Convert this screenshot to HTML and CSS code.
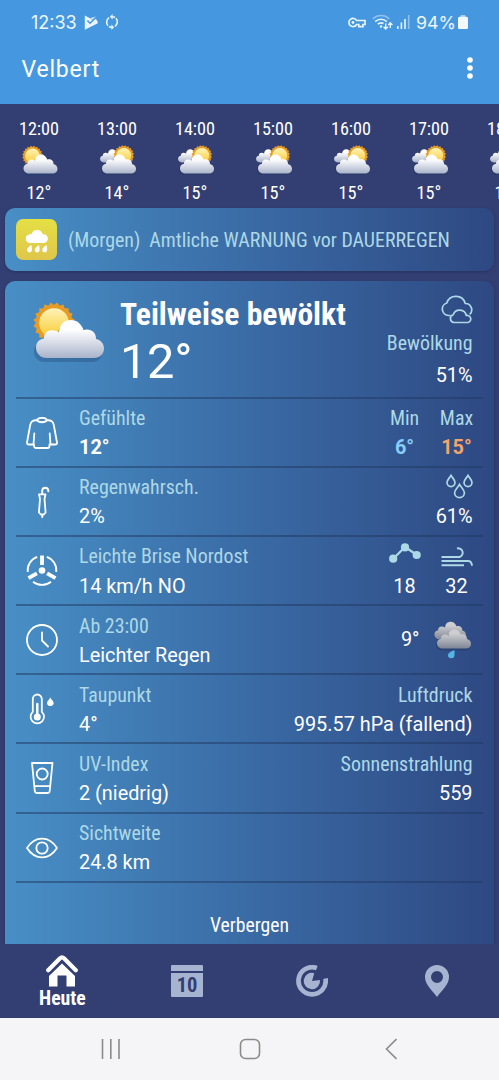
FILE: index.html
```html
<!DOCTYPE html>
<html lang="de">
<head>
<meta charset="utf-8">
<title>Velbert</title>
<link rel="stylesheet" href="styles.css">
</head>
<body>
<svg class="defs" width="0" height="0">
  <defs>
    <linearGradient id="sunFill" x1="0" y1="0" x2="0" y2="1"><stop offset="0" stop-color="#fff3b8"/><stop offset="1" stop-color="#f9cb30"/></linearGradient>
    <linearGradient id="cloudFill" x1="0" y1="0" x2="0" y2="1"><stop offset=".25" stop-color="#ffffff"/><stop offset="1" stop-color="#a9b3ca"/></linearGradient>
    <linearGradient id="greyFill" x1="0" y1="0" x2="0" y2="1"><stop offset=".2" stop-color="#cfcfd1"/><stop offset="1" stop-color="#7f8696"/></linearGradient>
    <path id="cloudShape" d="M14 57C7 57 3 52 3 46.500C3 41.500 6.500 38 11 37.500C10.500 32.500 14.500 29 19 29.200C21.500 29.300 24 30 26 31.500C26.500 23.500 31 19 38 19C44 19 48.500 23 50.500 29C57 27 63.500 31 63 38C68 39 71 43 71 47.500C71 53 67 57 61 57Z"/>
    <g id="sun">
      <g fill="#e79c26">
        <rect x="-14.700" y="-14.700" width="29.400" height="29.400"/>
        <rect x="-14.700" y="-14.700" width="29.400" height="29.400" transform="rotate(18)"/>
        <rect x="-14.700" y="-14.700" width="29.400" height="29.400" transform="rotate(36)"/>
        <rect x="-14.700" y="-14.700" width="29.400" height="29.400" transform="rotate(54)"/>
        <rect x="-14.700" y="-14.700" width="29.400" height="29.400" transform="rotate(72)"/>
      </g>
      <circle r="14.800" fill="url(#sunFill)"/>
    </g>
    <symbol id="partly" viewBox="0 0 72 62">
      <use href="#sun" x="21" y="22"/>
      <use href="#cloudShape" x="-2" y="4" fill="#1d3d66" opacity=".3"/>
      <use href="#cloudShape" fill="url(#cloudFill)"/>
    </symbol>
    <symbol id="mostly" viewBox="0 0 72 62">
      <use href="#cloudShape" transform="translate(-2 -5) scale(.7)" fill="#1d3055" opacity=".4"/>
      <use href="#cloudShape" transform="translate(-2 -5) scale(.7)" fill="url(#cloudFill)"/>
      <use href="#sun" x="47.500" y="21"/>
      <use href="#cloudShape" x="-1" y="3" fill="#1d3055" opacity=".35"/>
      <use href="#cloudShape" x="1" fill="url(#cloudFill)"/>
    </symbol>
  </defs>
</svg>
<div class="phone">
  <header class="top">
    <div class="status">
      <span class="clock">12:33</span>
      <svg class="s-play" viewBox="0 0 14 15"><path d="M.8 .5L6 3.300L12 1.500V4L13.800 7V8.300L.8 14.800Z" fill="#e8f5fd"/><path d="M3.400 5.600L6 8.300L12.200 2.300" fill="none" stroke="#4598e0" stroke-width="1.500"/><path d="M6.500 3.600L8.800 4.600L12.600 .6" fill="none" stroke="#4598e0" stroke-width=".6"/></svg>
      <svg class="s-sync" viewBox="0 0 14 16"><g fill="none" stroke="#e8f5fd" stroke-width="1.600"><path d="M4 3.700A5.500 5.500 0 0 0 3 11.800M10 12.300A5.500 5.500 0 0 0 11 4.200M6.500 2.700C8 2.600 9 2.800 10 3.500M7.500 13.300C6 13.400 5 13.200 4 12.500"/></g><path d="M7.600 0V5.400L4.800 2.700ZM6.400 16V10.600L9.200 13.300Z" fill="#e8f5fd"/></svg>
      <span class="grow"></span>
      <svg class="s-key" viewBox="0 0 18 11"><g fill="none" stroke="#e8f5fd" stroke-width="1.700"><path d="M8.600 3.500A4.100 4.100 0 1 0 8.600 7.500H10.800V9.700H15V7.500H17V3.500Z"/></g><circle cx="5" cy="5.500" r="1.400" fill="#e8f5fd"/></svg>
      <svg class="s-wifi" viewBox="0 0 21 16"><g fill="none" stroke="#e8f5fd" stroke-width="1.600"><path d="M.8 4.800A12 12 0 0 1 17.200 4.800" opacity=".45"/><path d="M3.200 7.600A8.500 8.500 0 0 1 14.800 7.600M5.800 10.200A5 5 0 0 1 11.500 9.500"/><path d="M13.700 9.500V15M11.600 12.800L13.700 15L15.800 12.800M18.300 14V9M16.300 11L18.300 8.800L20.400 11" stroke-width="1.400"/></g><circle cx="9" cy="12.500" r="1.200" fill="#e8f5fd"/></svg>
      <svg class="s-signal" viewBox="0 0 13 14"><g fill="#e8f5fd"><rect y="11" width="1.600" height="3"/><rect x="3.600" y="7.500" width="1.600" height="6.500"/><rect x="7.200" y="4" width="1.600" height="10"/><rect x="10.900" width="1.600" height="14" opacity=".45"/></g></svg>
      <span class="percent">94%</span>
      <svg class="s-batt" viewBox="0 0 10 14"><rect x="2.500" width="5" height="4" rx="1" fill="#a5cff1"/><rect y="1.800" width="10" height="12.200" rx="1.500" fill="#f2f8fd"/></svg>
    </div>
    <div class="titlebar">
      <h1>Velbert</h1>
      <svg class="dots" viewBox="0 0 6 22"><g fill="#fff"><circle cx="3" cy="3" r="2.800"/><circle cx="3" cy="11" r="2.800"/><circle cx="3" cy="19" r="2.800"/></g></svg>
    </div>
  </header>

  <section class="hours">
    <div class="hour"><span>12:00</span><svg><use href="#partly"/></svg><span>12°</span></div>
    <div class="hour"><span>13:00</span><svg><use href="#mostly"/></svg><span>14°</span></div>
    <div class="hour"><span>14:00</span><svg><use href="#mostly"/></svg><span>15°</span></div>
    <div class="hour"><span>15:00</span><svg><use href="#mostly"/></svg><span>15°</span></div>
    <div class="hour"><span>16:00</span><svg><use href="#mostly"/></svg><span>15°</span></div>
    <div class="hour"><span>17:00</span><svg><use href="#mostly"/></svg><span>15°</span></div>
    <div class="hour"><span>18:00</span><svg><use href="#mostly"/></svg><span>15°</span></div>
  </section>

  <section class="warning">
    <div class="badge"><svg viewBox="0 0 24 26" width="24" height="26"><g fill="#fff"><path d="M5 16A4.400 4.400 0 0 1 3.900 7.400A4.700 4.700 0 0 1 6.500 7.200A5.800 5.800 0 0 1 17.700 7.300A4.400 4.400 0 1 1 19 16Z"/><path id="wd" d="M6.300 18C4.500 19.500 2 20.500 2 23A2.400 2.400 0 0 0 6.900 23C7 21 6.600 19.500 6.300 18Z"/><use href="#wd" x="7.700"/><use href="#wd" x="15.200"/></g></svg></div>
    <span class="warn-text">(Morgen)&nbsp; Amtliche WARNUNG vor DAUERREGEN</span>
  </section>

  <main class="card">
    <section class="now">
      <svg class="now-icon"><use href="#partly"/></svg>
      <div class="now-main"><h2>Teilweise bewölkt</h2><div class="temp">12°</div></div>
      <div class="now-side">
        <svg width="33" height="30" viewBox="0 0 33 30"><g fill="none" stroke="#add8e6" stroke-width="1.700" stroke-linejoin="round"><path d="M10.500 21.500H8.500A6.400 6.400 0 0 1 6.800 9A9.700 9.700 0 0 1 25.300 9.500A6.300 6.300 0 0 1 29.800 20.300"/><path d="M14 28.500A4 4 0 0 1 13.200 20.700A6.800 6.800 0 0 1 26.300 21.500A3.600 3.600 0 0 1 28 28.500Z"/></g></svg>
        <span class="label">Bewölkung</span><span class="value">51%</span>
      </div>
    </section>

    <section class="row">
      <svg class="icon" viewBox="0 0 32 32"><path d="M11 3C6.500 3.500 5 4 4.200 8L1 25.500Q.8 27.500 3 27.500H7.500L8.300 16.500M8 27.500V29Q8.200 31 10 31H21.500Q23.500 31 23.500 29V27.500M23.700 16.500L24.500 27.500H29Q31.300 27.500 31 25.500L27.800 8C27 4 25.500 3.500 21 3C20 0 12 0 11 3C12.500 6 19.500 6 21 3"/></svg>
      <div class="pair"><span class="label">Gefühlte</span><b class="value">12°</b></div>
      <div class="pair mid"><span class="label">Min</span><b class="value min">6°</b></div>
      <div class="pair mid max-col"><span class="label">Max</span><b class="value max">15°</b></div>
    </section>
    <section class="row">
      <svg class="icon" viewBox="0 0 32 32"><path d="M16.200 8V4.300A3.100 3.100 0 0 1 22.300 4.300V5.300" class="hook"/><path d="M13 8.300H19.500L18.500 13L19.600 26.500L17.800 28.500H14.800L12.900 26.500L14 13ZM16.300 28.500V31.300"/></svg>
      <div class="pair"><span class="label">Regenwahrsch.</span><span class="value">2%</span></div>
      <div class="pair end"><span class="pic"><svg width="27" height="25" viewBox="0 0 27 25"><g fill="none" stroke="#add8e6" stroke-width="1.700"><path d="M5 1.300C3.500 4 1 6 1 8.600A4 4 0 0 0 9 8.600C9 6 6.500 4 5 1.300Z"/><path d="M22 1.300C20.500 4 18 6 18 8.600A4 4 0 0 0 26 8.600C26 6 23.500 4 22 1.300Z"/><path d="M13.500 10.500C11.800 13.500 8.600 15.800 8.600 18.800A4.900 4.900 0 0 0 18.400 18.800C18.400 15.800 15.200 13.500 13.500 10.500Z"/></g></svg></span><span class="value">61%</span></div>
    </section>
    <section class="row">
      <svg class="icon" viewBox="0 0 32 32"><path class="arc" d="M11.200 1.900A14.400 14.400 0 0 0 1.700 17M20.800 1.900A14.400 14.400 0 0 1 30.300 17M7 26.800A14.400 14.400 0 0 0 25 26.800"/><circle cx="16" cy="15.500" r="3.300" class="solid"/><path class="blade" d="M16 10V.5M10.900 18.300L2.500 23.200M21.100 18.300L29.500 23.200"/></svg>
      <div class="pair"><span class="label">Leichte Brise Nordost</span><span class="value">14 km/h NO</span></div>
      <div class="pair mid"><span class="pic"><svg width="32" height="21" viewBox="0 0 32 21"><path d="M4 16L16 4L28 12" fill="none" stroke="#add8e6" stroke-width="2.200"/><g fill="#add8e6"><circle cx="4.200" cy="15.700" r="4.100"/><circle cx="16" cy="4.400" r="4.100"/><circle cx="27.700" cy="12" r="4.100"/></g></svg></span><span class="value">18</span></div>
      <div class="pair mid max-col"><span class="pic wind"><svg width="32" height="20" viewBox="0 0 32 20"><path d="M.5 10H18.500A4.200 4.200 0 1 0 16 1.500M.5 14H27Q30.700 14 31 18.800M.5 18.300H23" fill="none" stroke="#add8e6" stroke-width="1.900"/></svg></span><span class="value">32</span></div>
    </section>
    <section class="row">
      <svg class="icon" viewBox="0 0 32 32"><circle cx="16" cy="16" r="15"/><path d="M16 8.500V16.500L22 22.500"/></svg>
      <div class="pair"><span class="label">Ab 23:00</span><span class="value">Leichter Regen</span></div>
      <div class="later"><span class="value">9°</span><svg width="40" height="40" viewBox="0 0 80 80"><use href="#cloudShape" transform="translate(1 -13) scale(.93 .92)" fill="#1d3055" opacity=".3"/><use href="#cloudShape" transform="translate(2 -14) scale(.93 .92)" fill="url(#greyFill)"/><use href="#cloudShape" x="5" y="4" fill="#1d3055" opacity=".35"/><use href="#cloudShape" transform="translate(7 0)" fill="url(#greyFill)"/><path d="M45 60C39 63 32 65 32 70A6.200 6.200 0 0 0 45 70C45.500 67 45 63 45 60Z" fill="#55b6e6"/></svg></div>
    </section>
    <section class="row">
      <svg class="icon" viewBox="0 0 32 32"><path d="M6.800 18.800V6A4.500 4.500 0 0 1 15.800 6V18.800A6.700 6.700 0 1 1 6.800 18.800Z"/><path d="M11.300 11V22" class="stem"/><circle cx="11.300" cy="24" r="3.500" class="solid"/><path class="solid" d="M24.300 4.500C23 7 21 8 21 10.300A3.400 3.400 0 0 0 27.700 10.300C27.700 8 25.600 7 24.300 4.500Z"/></svg>
      <div class="pair"><span class="label">Taupunkt</span><span class="value">4°</span></div>
      <div class="pair end"><span class="label">Luftdruck</span><span class="value">995.57 hPa (fallend)</span></div>
    </section>
    <section class="row">
      <svg class="icon" viewBox="0 0 32 32"><path d="M6 1H26.500L23.700 29Q23.500 31 21.500 31H11Q9 31 8.800 29ZM8.300 24.200H24.200"/><circle cx="16.200" cy="12" r="5.500"/></svg>
      <div class="pair"><span class="label">UV-Index</span><span class="value">2 (niedrig)</span></div>
      <div class="pair end"><span class="label">Sonnenstrahlung</span><span class="value">559</span></div>
    </section>
    <section class="row">
      <svg class="icon" viewBox="0 0 32 32"><path d="M1 16C9 3.500 23 3.500 31 16C23 28.500 9 28.500 1 16Z"/><circle cx="16" cy="16" r="5.700"/></svg>
      <div class="pair"><span class="label">Sichtweite</span><span class="value">24.8 km</span></div>
    </section>
    <div class="hide">Verbergen</div>
  </main>

  <nav class="tabs">
    <div class="tab active"><svg width="32" height="33" viewBox="0 0 32 33"><path d="M2.200 16.200L14 4.300Q16 2.500 18 4.300L29.800 16.200" fill="none" stroke="#fff" stroke-width="4.200" stroke-linecap="round"/><path d="M16 9.500L29 22V32.500H20.500V21.500H11.500V32.500H3V22Z" fill="#fff"/></svg><span>Heute</span></div>
    <div class="tab"><div class="cal"><div class="cal-top"></div><div class="cal-day">10</div></div></div>
    <div class="tab"><svg width="32" height="32" viewBox="0 0 32 32"><path d="M20.800 3.100A13.600 13.600 0 1 0 29.500 13.500" fill="none" stroke="#a6b4d1" stroke-width="4.700"/><path d="M16 16L18.300 8.200A8.200 8.200 0 1 0 24 15Z" fill="#a6b4d1"/></svg></div>
    <div class="tab"><svg width="24" height="32" viewBox="0 0 24 32"><path fill="#a6b4d1" fill-rule="evenodd" d="M12 0A12 12 0 0 0 0 12C0 20 8 26 12 32C16 26 24 20 24 12A12 12 0 0 0 12 0ZM12 6A6 6 0 1 1 12 18A6 6 0 1 1 12 6Z"/></svg></div>
  </nav>
  <footer class="sysnav">
    <svg width="20" height="20" viewBox="0 0 20 20"><path d="M1.500 0V20M9.800 0V20M18 0V20"/></svg>
    <svg class="home" width="22" height="22" viewBox="0 0 22 22"><rect x="1.500" y="1.500" width="19" height="19" rx="5"/></svg>
    <svg width="12" height="22" viewBox="0 0 12 22"><path d="M11.500 1L1.500 11L11.500 21"/></svg>
  </footer>
</div>
</body>
</html>
```
FILE: styles.css
```css
* { box-sizing: border-box; }
body { margin: 0; font-family: "Roboto", sans-serif; color: #fff; background: #333f73; }
.defs { position: absolute; }
svg { display: block; flex: none; }
.phone { width: 499px; height: 1080px; display: flex; flex-direction: column; overflow: hidden; }

.top { height: 104px; background: #4598e0; flex: none; }
.status { height: 44px; padding: 0 31px; display: flex; align-items: center; color: #edf6fd; font: 18px "Inter", sans-serif; }
.clock { width: 46px; font-weight: 400; white-space: nowrap; }
.s-play { width: 14px; height: 15px; margin-left: 7px; }
.s-sync { width: 14px; height: 16px; margin-left: 7px; }
.grow { flex: 1; }
.s-key { width: 18px; height: 11px; }
.s-wifi { width: 21px; height: 16px; margin-left: 6px; }
.s-signal { width: 13px; height: 14px; margin-left: 4px; }
.percent { width: 38px; margin-left: 6px; white-space: nowrap; font-weight: 400; font-size: 17.800px; }
.s-batt { width: 10px; height: 14px; margin-left: 4px; }
.titlebar { height: 50px; padding: 0 26px 0 21.500px; display: flex; align-items: center; justify-content: space-between; }
h1 { margin: 0; font-size: 23px; font-weight: 400; letter-spacing: .8px; }
.dots { width: 6px; height: 22px; margin-top: -2px; }

.hours { height: 104px; padding-top: 13px; display: flex; flex: none; overflow: hidden; }
.hour { width: 78px; flex: none; display: flex; flex-direction: column; align-items: center; font-size: 18.200px; line-height: 24px; font-stretch: 75%; }
.hour svg { width: 36px; height: 31px; margin: 4px 0 5px 1px; }

.warning { height: 63px; margin: 0 5px; padding-left: 11px; display: flex; align-items: center; gap: 11px; border-radius: 10px; background: linear-gradient(90deg, #488fc6, #3a6ba5 50%, #2e4882); box-shadow: 0 1px 3px #26325c; flex: none; }
.badge { width: 41px; height: 41px; border-radius: 7px; background: linear-gradient(#e4e044, #dfc64b); display: grid; place-items: center; }
.warn-text { font-size: 19.900px; font-stretch: 75%; color: #add8e6; white-space: nowrap; padding-top: 2px; }

.card { height: 663px; margin: 10px 5px 0; padding: 0 11px; border-radius: 10px 10px 0 0; background: linear-gradient(90deg, #488fc6, #3a6ba5 50%, #2e4882); box-shadow: 0 1px 3px #26325c; flex: none; }
.now { height: 117.500px; display: flex; border-bottom: 2px solid rgba(32, 56, 96, .5); padding-right: 10.500px; }
.now-icon { width: 72px; height: 62px; margin: 20px 0 0 17px; }
.now-main { flex: 1; padding: 15px 0 0 15px; white-space: nowrap; }
h2 { margin: 0; font-size: 31.600px; line-height: 38px; font-stretch: 75%; font-weight: 700; }
.temp { font-size: 48.800px; line-height: 56px; letter-spacing: -.3px; }
.now-side { display: flex; flex-direction: column; align-items: flex-end; padding-top: 12.500px; }
.now-side .label { line-height: 34px; margin-top: 3px; }
.now-side .value { line-height: 30px; }

.row { height: 69.200px; padding: 5.500px 10.500px 0 10px; display: flex; border-bottom: 2px solid rgba(32, 56, 96, .5); }
.icon { width: 32px; height: 32px; margin: 12.500px 21px 0 0; fill: none; stroke: #fff; stroke-width: 1.800; stroke-linejoin: round; stroke-linecap: round; }
.icon .solid { fill: #fff; stroke: none; }
.icon .arc { stroke-linecap: butt; }
.icon .blade { stroke-width: 3.800; stroke-linecap: butt; }
.icon .stem { stroke-width: 2.500; }
.icon .hook { stroke-width: 2; }
.pair { display: flex; flex-direction: column; line-height: 29.300px; white-space: nowrap; }
.pair:nth-child(2) { flex: 1; }
.mid { width: 32px; align-items: center; }
.max-col { margin-left: 20px; }
.end { align-items: flex-end; }
.label { font-size: 19.900px; font-stretch: 75%; color: #add8e6; }
.value { font-size: 19.850px; }
.min { color: #87cefa; }
.max { color: #f4a46a; }
.pic { height: 29.300px; padding-top: 1px; }
.pic.wind { padding-top: 5px; }
.later { display: flex; align-items: center; gap: 12px; height: 56px; margin-right: 1px; }
.hide { text-align: center; font-size: 19.700px; font-stretch: 75%; line-height: 24px; margin-top: 31.500px; }

.tabs { height: 74px; display: grid; grid-template-columns: repeat(4, 1fr); background: #333f73; flex: none; }
.tab { display: flex; flex-direction: column; align-items: center; justify-content: center; }
.active { justify-content: flex-start; padding-top: 10px; font-size: 19.700px; line-height: 24px; font-weight: 700; font-stretch: 75%; }
.cal { width: 32px; height: 32px; display: flex; flex-direction: column; gap: 2px; }
.cal-top { height: 6px; background: #a6b4d1; border-radius: 1px 1px 0 0; }
.cal-day { height: 24px; background: #a6b4d1; color: #333f73; border-radius: 0 0 1px 1px; text-align: center; font-size: 20.500px; line-height: 24px; font-weight: 700; font-stretch: 82%; }
.sysnav { height: 62px; background: #f5f5f7; display: flex; align-items: center; padding-left: 101px; flex: none; }
.sysnav svg { fill: none; stroke: #8b8b8b; stroke-width: 1.600; }
.sysnav .home { margin: 0 124px 0 118px; }
```
